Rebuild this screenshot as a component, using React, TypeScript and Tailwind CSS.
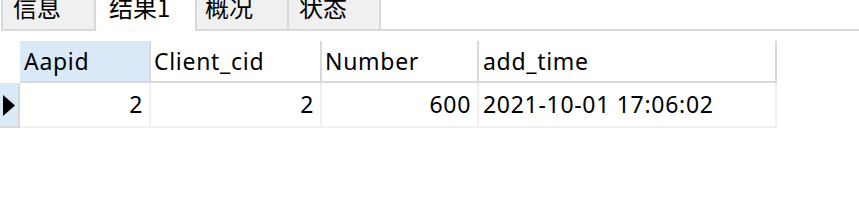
import React from "react";

export default function App() {
  const latin = "font-['Noto_Sans','Noto_Sans_CJK_SC',sans-serif]";
  return (
    <div className="w-[859px] h-[219px] bg-white overflow-hidden text-black">
      {/* tab bar */}
      <div className="flex h-[31px] font-['Noto_Sans_CJK_SC','Noto_Sans',sans-serif] text-[24px]">
        <div className="ml-px w-[95px] h-[31px] bg-[#f0f0f0] border-l-2 border-r-2 border-b-2 border-[#d9d9d9] pl-[10px] overflow-hidden">
          <div className="-mt-[9px] leading-[32px]">信息</div>
        </div>
        <div className="w-[99px] h-[31px] bg-white pl-[13px] overflow-hidden">
          <div className="-mt-[9px] leading-[32px]">结果1</div>
        </div>
        <div className="w-[94px] h-[31px] bg-[#f0f0f0] border-l-2 border-r-2 border-b-2 border-[#d9d9d9] pl-[8px] overflow-hidden">
          <div className="-mt-[9px] leading-[32px]">概况</div>
        </div>
        <div className="w-[92px] h-[31px] bg-[#f0f0f0] border-r-2 border-b-2 border-[#d9d9d9] pl-[10px] overflow-hidden">
          <div className="-mt-[9px] leading-[32px]">状态</div>
        </div>
        <div className="flex-1 h-[31px] border-b-2 border-[#d9d9d9]" />
      </div>

      {/* grid */}
      <div className={`mt-[10px] grid grid-cols-[20px_131px_171px_157px_298px] text-[23px] tracking-[0.7px] ${latin}`}>
        {/* header */}
        <div className="h-[42px] bg-white" />
        <div className="h-[42px] bg-[#d9e9f8] border-r-2 border-b-2 border-[#d9d9d9] flex items-center pl-[4px] leading-none">Aapid</div>
        <div className="h-[42px] bg-white border-r-2 border-b-2 border-[#d9d9d9] flex items-center pl-[3px] leading-none">Client_cid</div>
        <div className="h-[42px] bg-white border-r-2 border-b-2 border-[#d9d9d9] flex items-center pl-[3px] leading-none">Number</div>
        <div className="h-[42px] bg-white border-r-2 border-b-2 border-[#d9d9d9] flex items-center pl-[4px] leading-none">add_time</div>

        {/* data row */}
        <div className="h-[45px] bg-[#d9e9f8] border-r-2 border-b-2 border-[#d9d9d9] flex items-center pl-[3px]">
          <svg width="12" height="21" viewBox="0 0 12 21" className="mt-[2px]">
            <polygon points="0,0 12,10.5 0,21" fill="#000" />
          </svg>
        </div>
        <div className="h-[45px] border-r-2 border-b-2 border-[#f0f0f0] flex items-center justify-end pr-[6px] leading-none">2</div>
        <div className="h-[45px] border-r-2 border-b-2 border-[#f0f0f0] flex items-center justify-end pr-[6px] leading-none">2</div>
        <div className="h-[45px] border-r-2 border-b-2 border-[#f0f0f0] flex items-center justify-end pr-[6px] leading-none">600</div>
        <div className="h-[45px] border-r-2 border-b-2 border-[#f0f0f0] flex items-center pl-[4px] leading-none">2021-10-01 17:06:02</div>
      </div>
    </div>
  );
}
